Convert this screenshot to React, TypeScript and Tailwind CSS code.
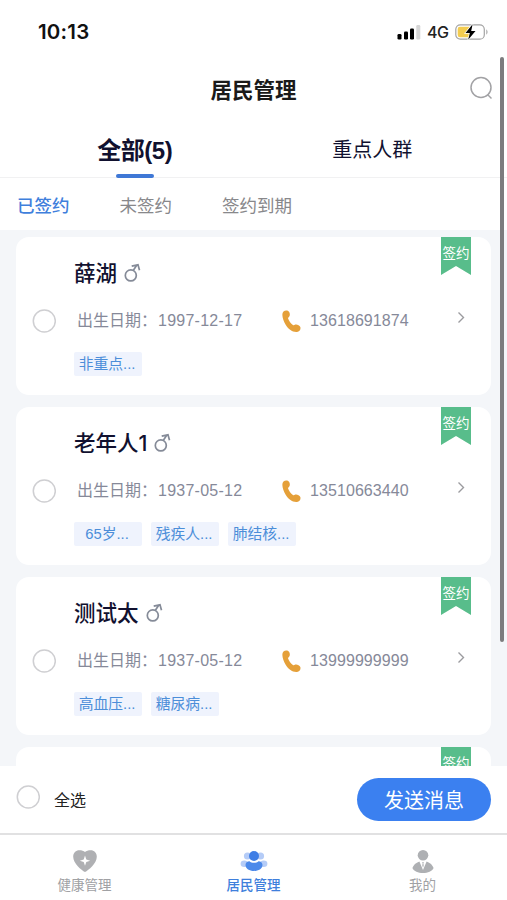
import { useState } from 'react';

const RESIDENTS = [
  { id: 1, name: '薛湖', birthday: '1997-12-17', phone: '13618691874', tags: ['非重点...'] },
  { id: 2, name: '老年人1', birthday: '1937-05-12', phone: '13510663440', tags: ['65岁...', '残疾人...', '肺结核...'] },
  { id: 3, name: '测试太', birthday: '1937-05-12', phone: '13999999999', tags: ['高血压...', '糖尿病...'] },
];

const FILTERS = ['已签约', '未签约', '签约到期'];

type Resident = (typeof RESIDENTS)[number];

function StatusBar() {
  return (
    <div className="h-16 shrink-0 flex items-center justify-between pl-[38px] pr-[18px]">
      <span className="font-['Inter'] text-[20.500px] leading-6 font-semibold tracking-[0.2px] text-[#111]">10:13</span>
      <div className="flex items-center">
        <svg width="24" height="16" viewBox="0 0 24 16">
          <rect x="0.5" y="10" width="4" height="5.500" rx="1.300" fill="#000" />
          <rect x="7" y="7.500" width="4" height="8" rx="1.300" fill="#000" />
          <rect x="13" y="4.500" width="4" height="11" rx="1.300" fill="#000" />
          <rect x="19.300" y="1" width="4" height="14.500" rx="1.300" fill="#d6d6d6" />
        </svg>
        <span className="ml-[6px] w-[22px] font-['Inter'] text-[16px] leading-5 font-medium tracking-[-0.5px] text-[#222]">4G</span>
        <svg className="ml-[6px]" width="34" height="18" viewBox="0 0 34 18">
          <rect x="0.800" y="1.800" width="28.500" height="14.400" rx="4.500" fill="#fff" stroke="#a3a3a3" strokeWidth="1.200" />
          <path d="M5 3.700h9.500v10.600H5a2.300 2.300 0 0 1-2.300-2.300V6A2.300 2.300 0 0 1 5 3.700z" fill="#f3cc50" />
          <path d="M31.300 6.500c1.600.6 1.600 4.400 0 5z" fill="#a3a3a3" />
          <path d="M17.600 1.200L10.500 10h4.300l-1.600 6.800L20.500 8h-4.300z" fill="#000" stroke="#fff" strokeWidth="1.500" paintOrder="stroke" />
        </svg>
      </div>
    </div>
  );
}

function Radio({ checked, onClick }: { checked: boolean; onClick: () => void }) {
  return (
    <button onClick={onClick} className="size-6 shrink-0">
      <svg width="24" height="24" viewBox="0 0 24 24" strokeWidth="1.500">
        <circle cx="12.300" cy="12" r="11" fill={checked ? '#3b82f0' : '#fff'} stroke={checked ? '#3b82f0' : '#cfcfd2'} />
      </svg>
    </button>
  );
}

function Ribbon() {
  return (
    <div className="absolute right-[20px] top-0 h-[38px] w-[30px] bg-[#58bd8b] text-center text-[13.500px] leading-[33px] text-white [clip-path:polygon(0_0,100%_0,100%_100%,50%_76%,0_100%)]">
      签约
    </div>
  );
}

function ResidentCard({ resident, checked, onToggle }: { resident: Resident; checked: boolean; onToggle: () => void }) {
  return (
    <div className="relative h-[158px] shrink-0 rounded-[13px] bg-white flex">
      <div className="w-[58px] shrink-0 flex items-center pl-[16px] pt-[9px]">
        <Radio checked={checked} onClick={onToggle} />
      </div>

      <div className="flex-1 pt-[20px]">
        <div className="flex items-center h-8">
          <span className="text-[21.500px] leading-8 font-medium text-[#11112f] font-['Inter','Noto_Sans_CJK_SC',sans-serif]">{resident.name}</span>
          <svg className="ml-[7px]" width="17" height="20" viewBox="0 0 17 20" fill="none" stroke="#858b98" strokeWidth="1.700">
            <circle cx="6.800" cy="12.400" r="5.500" />
            <path d="M9.200 7.500L12.900 2M7.700 3.200L14 1.800L15.500 7.300" />
          </svg>
        </div>

        <div className="mt-[20px] flex items-center h-6 text-[16px] text-[#868999]">
          <span className="w-[80px] pl-[3px] whitespace-nowrap">出生日期：</span>
          <span className="ml-[4px] w-[123px] tracking-[0.250px]">{resident.birthday}</span>
          <svg className="ml-[1px]" width="19" height="23" viewBox="0 0 19 23" fill="#e5a039">
            <path d="M1.500 1.600C3 .2 5.900.3 7 1.800c1.100 1.500 1.100 3.800.1 5-.6.8-1.300 1-.9 2 .9 2.500 2.600 4.700 4.700 6.200.9.600 1.400-.1 2.400-.5 1.600-.5 4.300.7 5 2.600.7 1.800-.6 4.200-2.500 4.700-4.700 1-9.600-2.600-12.300-7.300C1.100 10.300-1 4.300 1.500 1.600z" />
          </svg>
          <span className="ml-[9px] flex-1 tracking-[0.080px]">{resident.phone}</span>
          <svg className="mr-[25px] -mt-[7px]" width="9" height="13" viewBox="0 0 9 13" fill="none" stroke="#9b9b9f" strokeWidth="1.400">
            <path d="M1.500 1.500l5 5L1.500 11.500" />
          </svg>
        </div>

        <div className="mt-[19px] flex gap-[9px]">
          {resident.tags.map((tag) => (
            <span key={tag} className="h-6 w-[68px] rounded-[2px] bg-[#eff3fd] pr-[2px] text-center text-[14.800px] leading-6 text-[#4c8ed9]">
              {tag}
            </span>
          ))}
        </div>
      </div>

      <Ribbon />
    </div>
  );
}

function HeartIcon() {
  return (
    <svg width="26" height="24" viewBox="0 0 26 24">
      <path d="M13 23C9.500 21.200 1.200 14.500 1.200 7.700 1.200 3.800 3.900 1.200 7.300 1.200c2.400 0 4.400.6 5.700 1.700 1.300-1.100 3.300-1.700 5.700-1.700 3.400 0 6.100 2.600 6.100 6.500C24.800 14.500 16.500 21.200 13 23z" fill="#afb0b3" />
      <path d="M13 6.500l1.300 3.900 3.900 1.300-3.900 1.300-1.300 3.800-1.300-3.800-3.900-1.300 3.900-1.300z" fill="#fff" />
    </svg>
  );
}

function GroupIcon() {
  return (
    <svg width="28" height="24" viewBox="0 0 28 24">
      <g fill="#b5ccf7">
        <circle cx="7.500" cy="7" r="3.600" />
        <circle cx="20.500" cy="7" r="3.600" />
        <ellipse cx="4.300" cy="14.800" rx="3.700" ry="3.200" />
        <ellipse cx="23.700" cy="14.800" rx="3.700" ry="3.200" />
      </g>
      <circle cx="14" cy="7" r="5" fill="#3f7ee5" />
      <path d="M5.500 16c0-2.300 1.800-3.700 4-3.700 2 2 7 2 9 0 2.200 0 4 1.400 4 3.700 0 3.700-4 6-8.500 6s-8.500-2.300-8.500-6z" fill="#4c89ea" />
    </svg>
  );
}

function PersonIcon() {
  return (
    <svg width="24" height="25" viewBox="0 0 24 25" fill="#aeb0b3">
      <circle cx="12" cy="6.300" r="5.300" />
      <path d="M1.400 19c1.100-3 3.400-5.200 7-6.500L12 21l3.600-8.500c3.600 1.300 5.900 3.500 7 6.500-1.600 3.400-5.600 5-10.600 5S3 22.400 1.400 19z" />
      <path d="M11.200 13h1.600l-.4 1.300.3 2.300L12 18.700l-.7-2.100.3-2.300z" />
    </svg>
  );
}

export default function App() {
  const [filter, setFilter] = useState('已签约');
  const [selected, setSelected] = useState<number[]>([]);

  const allSelected = selected.length === RESIDENTS.length;

  const toggle = (id: number) => {
    setSelected(selected.includes(id) ? selected.filter((item) => item !== id) : [...selected, id]);
  };

  return (
    <div className="relative flex h-[900px] w-[507px] flex-col overflow-hidden bg-white font-['Liberation_Sans','Noto_Sans_CJK_SC',sans-serif]">
      <StatusBar />

      <header className="h-[52px] shrink-0 grid grid-cols-[1fr_auto_1fr] items-center">
        <h1 className="col-start-2 pt-[2px] text-[21.500px] leading-8 font-bold text-[#1a1a1a]">居民管理</h1>
        <button className="justify-self-end mr-[14px] -mt-[4px]">
          <svg width="24" height="24" viewBox="0 0 24 24" fill="none" stroke="#a2a2a5" strokeWidth="1.500">
            <circle cx="12" cy="11.500" r="10" />
            <path d="M18.500 18.500l4 4" />
          </svg>
        </button>
      </header>

      <div className="h-[62px] shrink-0 grid grid-cols-2 border-b border-[#f1f1f2] px-4 text-[#11112f]">
        <button className="relative pt-[8px] text-[24px] font-bold tracking-[-0.5px]">
          全部(5)
          <span className="absolute bottom-[-1px] left-1/2 h-1 w-[38px] -translate-x-1/2 rounded-[2px] bg-[#3f78d6]" />
        </button>
        <button className="pt-[6px] text-[20px]">重点人群</button>
      </div>

      <div className="h-[52px] shrink-0 flex items-center gap-[50px] pl-[17px] pt-[4px] text-[17.500px]">
        {FILTERS.map((item) => (
          <button key={item} onClick={() => setFilter(item)} className={filter === item ? 'font-medium text-[#3f7fdc]' : 'text-[#88888b]'}>
            {item}
          </button>
        ))}
      </div>

      <main className="flex-1 min-h-0 overflow-hidden bg-[#f4f6f9] flex flex-col gap-3 px-4 pt-[7px]">
        {RESIDENTS.map((resident) => (
          <ResidentCard key={resident.id} resident={resident} checked={selected.includes(resident.id)} onToggle={() => toggle(resident.id)} />
        ))}
        {/* next card, still loading */}
        <div className="relative h-[158px] shrink-0 rounded-[13px] bg-white">
          <Ribbon />
        </div>
      </main>

      <div className="h-[67px] shrink-0 flex items-center pl-4 pr-4">
        <div className="-mt-[5px] flex">
          <Radio checked={allSelected} onClick={() => setSelected(allSelected ? [] : RESIDENTS.map((item) => item.id))} />
        </div>
        <span className="ml-[14px] mt-[2px] flex-1 text-[16px] text-[#222]">全选</span>
        <button className="h-[43px] w-[134px] rounded-full bg-[#3b80f0] pt-[2px] text-[20px] text-white">发送消息</button>
      </div>

      <nav className="h-[67px] shrink-0 grid grid-cols-3 border-t-2 border-[#e1e1e2] text-[13.500px] leading-5 text-[#a0a1a4]">
        <button className="flex flex-col items-center justify-start pt-[14px]">
          <span className="h-[27px]"><HeartIcon /></span>
          健康管理
        </button>
        <button className="flex flex-col items-center justify-start pt-[14px] font-medium text-[#3f7fdc]">
          <span className="h-[27px]"><GroupIcon /></span>
          居民管理
        </button>
        <button className="flex flex-col items-center justify-start pt-[14px]">
          <span className="h-[27px]"><PersonIcon /></span>
          我的
        </button>
      </nav>

      {/* scroll indicator */}
      <div className="absolute right-[3px] top-[57px] h-[585px] w-[4px] rounded-full bg-[#7c7c7e]" />
    </div>
  );
}
